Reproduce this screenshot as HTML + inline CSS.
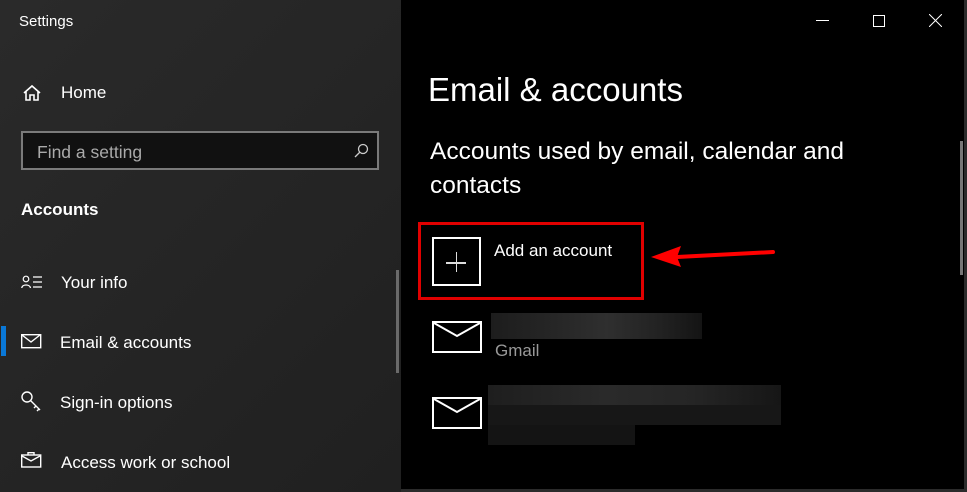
<!DOCTYPE html>
<html><head><style>
body{margin:0;width:967px;height:492px;overflow:hidden;background:#000;font-family:"Liberation Sans",sans-serif;position:relative;color:#fff}
.l{position:absolute;left:0;top:0;width:401px;height:492px;background:linear-gradient(135deg,#2a2a2a,#202020)}
.t{position:absolute;white-space:nowrap}
.ico{position:absolute}
</style></head><body>
<div class="l"></div>
<div class="t" style="left:19px;top:13px;font-size:15px">Settings</div>
<svg class="ico" style="left:22px;top:84px" width="20" height="18" viewBox="0 0 20 18"><path d="M2 9L10 2L18 9M4 7.5V16H8V11H12V16H16V7.5" fill="none" stroke="#fff" stroke-width="1.6"/></svg>
<div class="t" style="left:61px;top:83px;font-size:17px">Home</div>
<div style="position:absolute;left:21px;top:131px;width:354px;height:35px;border:2px solid #7a7a7a;background:#111"></div>
<div class="t" style="left:37px;top:142px;font-size:17.5px;color:#aaa">Find a setting</div>
<svg class="ico" style="left:353px;top:143px" width="16" height="16"><circle cx="10" cy="6" r="4.5" fill="none" stroke="#ccc" stroke-width="1.3"/><path d="M7 9L2 14" stroke="#ccc" stroke-width="1.3"/></svg>
<div class="t" style="left:21px;top:200px;font-size:17px;font-weight:bold">Accounts</div>
<svg class="ico" style="left:21px;top:275px" width="22" height="14"><circle cx="5" cy="4" r="2.8" fill="none" stroke="#fff" stroke-width="1.2"/><path d="M0.8 13C1 9 9 9 9.5 13M12 2H21M12 7H21M12 12H21" fill="none" stroke="#fff" stroke-width="1.3"/></svg>
<div class="t" style="left:61px;top:273px;font-size:17px">Your info</div>
<div style="position:absolute;left:1px;top:326px;width:5px;height:30px;background:#0a78d7"></div>
<svg class="ico" style="left:21px;top:334px" width="21" height="15"><rect x="0.7" y="0.7" width="19" height="13" fill="none" stroke="#fff" stroke-width="1.4"/><path d="M1 1L10 8L19 1" fill="none" stroke="#fff" stroke-width="1.4"/></svg>
<div class="t" style="left:60px;top:333px;font-size:17px">Email &amp; accounts</div>
<svg class="ico" style="left:21px;top:391px" width="22" height="22"><circle cx="6" cy="6" r="5" fill="none" stroke="#fff" stroke-width="1.4"/><path d="M9.5 9.5L19 19M15 15L13 17M18 18L16 20" fill="none" stroke="#fff" stroke-width="1.4"/></svg>
<div class="t" style="left:60px;top:393px;font-size:17px">Sign-in options</div>
<svg class="ico" style="left:21px;top:452px" width="21" height="16"><rect x="0.7" y="3" width="19" height="12" fill="none" stroke="#fff" stroke-width="1.4"/><path d="M7 3V0.7H13V3M1 4L10 9L19 4" fill="none" stroke="#fff" stroke-width="1.4"/></svg>
<div class="t" style="left:61px;top:453px;font-size:17px">Access work or school</div>
<div style="position:absolute;left:396px;top:270px;width:3px;height:103px;background:#6a6a6a"></div>
<div style="position:absolute;left:964px;top:0;width:3px;height:492px;background:#2b2b2b"></div>
<div style="position:absolute;left:401px;top:489px;width:566px;height:3px;background:#2b2b2b"></div>
<div style="position:absolute;left:816px;top:20px;width:13px;height:1px;background:#fff"></div>
<div style="position:absolute;left:873px;top:15px;width:10px;height:10px;border:1px solid #fff"></div>
<svg class="ico" style="left:929px;top:14px" width="13" height="13"><path d="M0 0L13 13M13 0L0 13" stroke="#fff" stroke-width="1"/></svg>
<div style="position:absolute;left:960px;top:141px;width:3px;height:134px;background:#777"></div>
<div class="t" style="left:428px;top:71px;font-size:33px;font-weight:300">Email &amp; accounts</div>
<div class="t" style="left:430px;top:135px;font-size:24.5px;line-height:34px">Accounts used by email, calendar and<br>contacts</div>
<div style="position:absolute;left:418px;top:222px;width:220px;height:72px;border:3px solid #e00000"></div>
<div style="position:absolute;left:432px;top:237px;width:45px;height:45px;border:2px solid #fff"></div>
<div style="position:absolute;left:446px;top:262px;width:20px;height:1.5px;background:#ddd"></div>
<div style="position:absolute;left:455.5px;top:252px;width:1.5px;height:20px;background:#ddd"></div>
<div class="t" style="left:494px;top:241px;font-size:17px">Add an account</div>
<svg class="ico" style="left:645px;top:240px" width="135" height="30"><path d="M128 12L32 17" stroke="#f00" stroke-width="4" stroke-linecap="round"/><path d="M6 17L36 6L32 17L36 27Z" fill="#f00"/></svg>
<svg class="ico" style="left:432px;top:321px" width="50" height="32"><rect x="1" y="1" width="48" height="30" fill="none" stroke="#fff" stroke-width="2"/><path d="M2 2L25 15L48 2" fill="none" stroke="#fff" stroke-width="2"/></svg>
<div style="position:absolute;left:491px;top:313px;width:211px;height:26px;background:linear-gradient(90deg,#1d1d1d,#262626 30%,#2f2f2f 55%,#222 80%,#141414)"></div>
<div class="t" style="left:495px;top:341px;font-size:17px;color:#999">Gmail</div>
<svg class="ico" style="left:432px;top:397px" width="50" height="32"><rect x="1" y="1" width="48" height="30" fill="none" stroke="#fff" stroke-width="2"/><path d="M2 2L25 15L48 2" fill="none" stroke="#fff" stroke-width="2"/></svg>
<div style="position:absolute;left:488px;top:385px;width:293px;height:20px;background:linear-gradient(90deg,#1e1e1e,#2a2a2a 40%,#252525 70%,#161616)"></div>
<div style="position:absolute;left:488px;top:405px;width:293px;height:20px;background:#171717"></div>
<div style="position:absolute;left:488px;top:425px;width:147px;height:20px;background:#141414"></div>
</body></html>
